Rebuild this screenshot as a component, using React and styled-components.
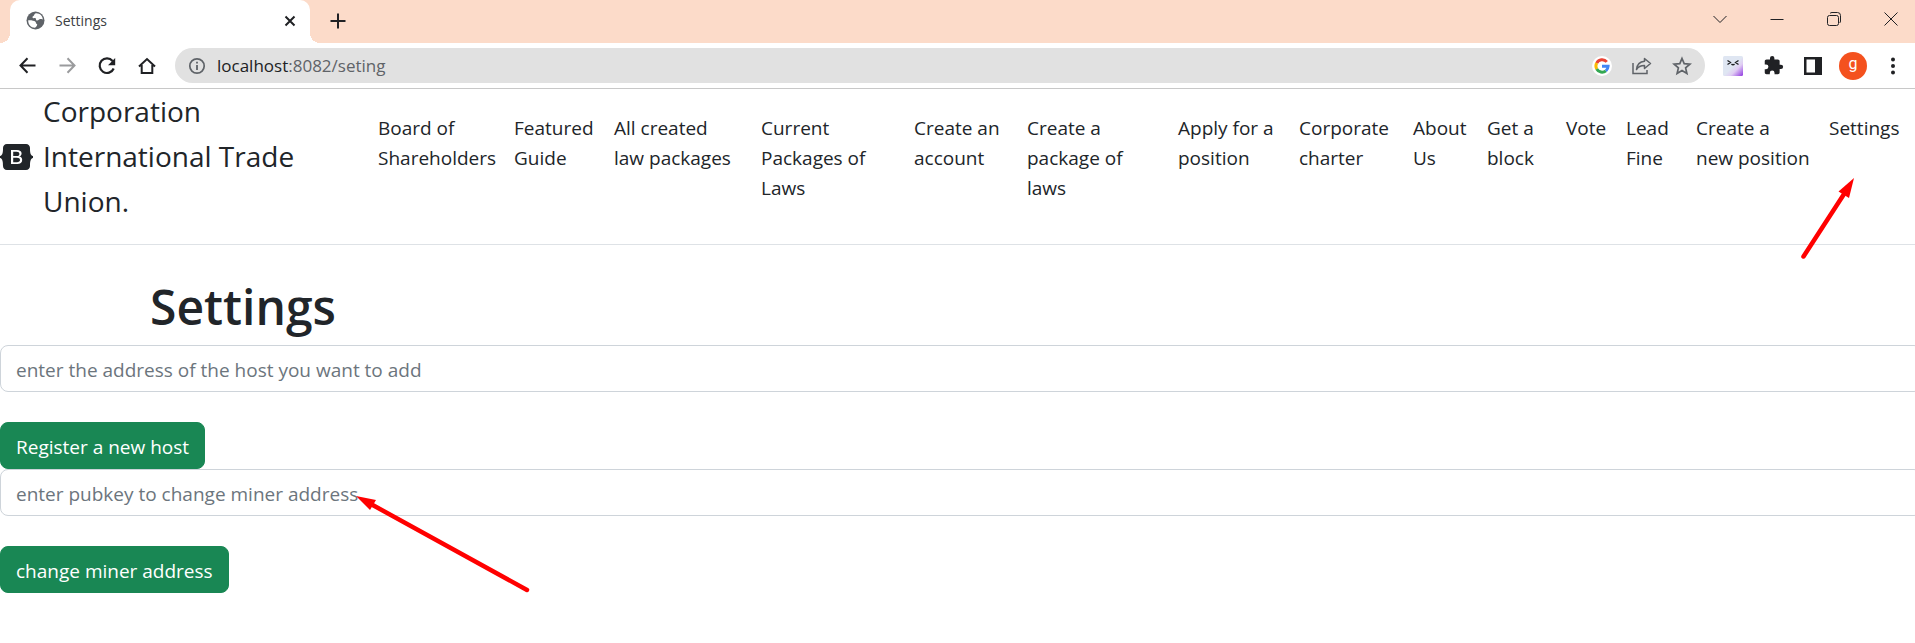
import React from "react";
import styled, { createGlobalStyle } from "styled-components";

const GlobalStyle = createGlobalStyle`
  * { box-sizing: border-box; }
  body {
    margin: 0;
    overflow-x: hidden;
    background: #fff;
    color: #212529;
    font-family: "Open Sans", "Noto Sans", sans-serif;
    font-size: 19px;
    line-height: 30px;
  }
  button, input { font: inherit; }
`;

/* ---------- Browser frame ---------- */

const TabStrip = styled.div`
  display: flex;
  justify-content: space-between;
  height: 43px;
  padding-left: 10px;
  background: #fcdbc9;
`;

const TabGroup = styled.div`
  display: flex;
  align-items: center;
`;

const Tab = styled.div`
  position: relative;
  display: flex;
  align-items: center;
  gap: 10px;
  width: 300px;
  height: 43px;
  padding: 0 10px 2px 16px;
  border-radius: 10px 10px 0 0;
  background: #fff;
  color: #3c4043;
  font-size: 14px;

  &::before,
  &::after {
    content: "";
    position: absolute;
    bottom: 0;
    width: 10px;
    height: 10px;
  }
  &::before {
    right: 100%;
    background: radial-gradient(circle at 0 0, transparent 10px, #fff 10px);
  }
  &::after {
    left: 100%;
    background: radial-gradient(circle at 100% 0, transparent 10px, #fff 10px);
  }
`;

const TabTitle = styled.span`
  flex: 1;
`;

const IconButton = styled.button`
  display: flex;
  flex: none;
  align-items: center;
  justify-content: center;
  width: ${(p) => p.$size || 24}px;
  height: ${(p) => p.$size || 24}px;
  padding: 0;
  border: 0;
  background: none;
  color: ${(p) => p.$color || "#202124"};
`;

const NewTab = styled(IconButton)`
  margin: 0 0 2px 16px;
`;

const WindowControls = styled.div`
  display: flex;
  height: 37px;
`;

const WindowButton = styled(IconButton)`
  width: 57px;
  height: 37px;
  &:last-child { width: 53px; padding-left: 5px; }
`;

const Toolbar = styled.div`
  display: flex;
  align-items: center;
  gap: 16px;
  height: 46px;
  padding: 0 8px 0 15px;
  border-bottom: 1px solid #c8c8c8;
`;

const AddressBar = styled.div`
  display: flex;
  flex: 1;
  align-items: center;
  gap: 16px;
  height: 35px;
  padding: 0 11px 0 13px;
  border-radius: 18px;
  background: #e1e1e1;
`;

const Address = styled.div`
  flex: 1;
  margin-left: -5px;
  color: #202124;
  font-size: 17px;
  outline: 0;
  span { color: #5f6368; }
`;

const Extensions = styled.div`
  display: flex;
  align-items: center;
  gap: 12px;
  margin-left: -2px;
`;

const Avatar = styled.button`
  width: 28px;
  height: 28px;
  padding: 0 0 4px;
  border: 0;
  border-radius: 50%;
  background: #f4511e;
  color: #fff;
  font-family: Roboto, sans-serif;
  font-size: 16px;
  line-height: 24px;
`;

/* ---------- Page ---------- */

const Page = styled.div`
  position: relative;
`;

const Header = styled.header`
  display: flex;
  align-items: flex-start;
  padding-bottom: 20px;
  border-bottom: 1px solid #dee2e6;
`;

const Brand = styled.a`
  display: flex;
  flex: 368;
  align-items: center;
  gap: 10px;
  color: #212529;
  font-size: 28px;
  line-height: 45px;
  text-decoration: none;
  white-space: pre-line;
`;

const Nav = styled.ul`
  display: grid;
  flex: 1547;
  grid-template-columns: 136fr 100fr 147fr 153fr 113fr 151fr 121fr 114fr 74fr 79fr 60fr 70fr 133fr 96fr;
  margin: 0;
  padding: 14px 0 0;
  list-style: none;
  li { min-width: 0; }
`;

const NavLink = styled.a`
  display: block;
  padding: 10px;
  color: #212529;
  text-decoration: none;
  white-space: pre;
`;

const Title = styled.h1`
  margin: 0;
  padding: 32px 0 8px 150px;
  font-size: 48px;
  font-weight: 600;
  line-height: 60px;
`;

/* The fields bleed past the right edge of the window. */
const Form = styled.form`
  display: flex;
  flex-direction: column;
  align-items: flex-start;
  gap: 30px;
  margin-right: -7px;
`;

const TextInput = styled.input`
  display: block;
  width: 100%;
  height: 47px;
  padding: 8px 15px 6px;
  border: 1px solid #ced4da;
  border-radius: 8px;
  background: #fff;
  color: #212529;
  &::placeholder { color: #6c757d; opacity: 1; }
`;

const SubmitButton = styled.button`
  height: 47px;
  padding: 8px 15px 6px;
  border: 1px solid #198754;
  border-radius: 8px;
  background: #198754;
  color: #fff;
`;

const Arrow = styled.svg`
  position: absolute;
  top: ${(p) => p.$top}px;
  left: ${(p) => p.$left};
  pointer-events: none;
`;

/* ---------- Icons ---------- */

const stroke = { fill: "none", stroke: "currentColor", strokeWidth: 2 };

const Globe = () => (
  <svg width="19" height="19" viewBox="0 0 19 19" aria-hidden="true">
    <circle cx="9.5" cy="9.5" r="9" fill="#5f6368" />
    <path d="M10 2.2c-2 .3-1.300 2.300-3 3-1 .5-.5 2.300 1 2 1.500-.3 2 .3 2 1.300 0 1.500 2 1.200 2.800.2.600-.8 2-.7 4-.2-.1-3.500-3-6.400-6.800-6.300zM2.200 9.300c2.500-.4 6 .5 7 1.200 1.200.8.300 2 1.300 2.300 1.500.4.300 2.700-1.500 4C5 16.900 2 13.400 2.200 9.300z" fill="#fff" />
  </svg>
);

const Back = ({ flip }) => (
  <svg width="17" height="17" viewBox="0 0 17 17" transform={flip ? "scale(-1 1)" : undefined} aria-hidden="true">
    <path d="M16.500 8.500H2M8.500 1.300L1.500 8.500l7 7.200" {...stroke} />
  </svg>
);

const Reload = () => (
  <svg width="18" height="18" viewBox="0 0 18 18" aria-hidden="true">
    <path d="M14.600 4A7.300 7.300 0 1 0 15.700 11.500" {...stroke} strokeWidth="2.200" />
    <path d="M17.200 1v7.200H10z" fill="currentColor" />
  </svg>
);

const Home = () => (
  <svg width="18" height="18" viewBox="0 0 18 18" aria-hidden="true">
    <path d="M1 9.500L9 2l8 7.500M3.700 8v8h10.600V8" {...stroke} />
  </svg>
);

const Info = () => (
  <svg width="18" height="18" viewBox="0 0 18 18" aria-hidden="true">
    <circle cx="9" cy="9" r="7.200" fill="none" stroke="#5f6368" strokeWidth="1.700" />
    <path d="M9 8v5M9 4.800v1.800" stroke="#5f6368" strokeWidth="1.800" />
  </svg>
);

const Google = () => (
  <svg width="20" height="20" viewBox="0 0 20 20" aria-hidden="true">
    <circle cx="10" cy="10" r="10" fill="#fff" />
    <g fill="none" strokeWidth="3">
      <path d="M14.800 5.900A6.100 6.100 0 0 0 4.700 7.100" stroke="#ea4335" />
      <path d="M4.700 7.100a6.100 6.100 0 0 0 0 5.900" stroke="#fbbc05" />
      <path d="M4.700 13a6.100 6.100 0 0 0 9.200 1.800" stroke="#34a853" />
      <path d="M13.900 14.800a6.100 6.100 0 0 0 2.200-4.500H10" stroke="#4285f4" />
    </g>
  </svg>
);

const Share = () => (
  <svg width="20" height="18" viewBox="0 0 20 18" aria-hidden="true">
    <path d="M1 6v10.500h14V13" {...stroke} strokeWidth="1.500" />
    <path d="M12.500 1.500L18.500 6.500l-6 5V8.600C8.500 8.600 6 10 4.500 12.500 5 8 7.500 4.700 12.500 4.300z" {...stroke} strokeWidth="1.500" strokeLinejoin="round" />
  </svg>
);

const Star = () => (
  <svg width="20" height="20" viewBox="0 0 20 20" aria-hidden="true">
    <path d="M10 2.500l2.200 5.200 5.700.5-4.300 3.700 1.300 5.500-4.900-2.900-4.900 2.900 1.300-5.500-4.300-3.700 5.700-.5z" {...stroke} strokeWidth="1.700" />
  </svg>
);

const Face = () => (
  <svg width="20" height="20" viewBox="0 0 20 20" aria-hidden="true">
    <defs>
      <linearGradient id="face" x1="0" y1="0" x2="1" y2="1">
        <stop offset="0.500" stopColor="#dfe6f2" />
        <stop offset="0.680" stopColor="#e0cdf3" />
        <stop offset="1" stopColor="#8f35e0" />
      </linearGradient>
    </defs>
    <rect width="20" height="20" rx="1.500" fill="url(#face)" />
    <path d="M4.500 4.500l3 2-3 2M15.500 4.500l-3 2 3 2M8.500 8c.8 1 2.200 1 3 0" fill="none" stroke="#202124" strokeWidth="1.300" />
  </svg>
);

const Puzzle = () => (
  <svg width="21" height="21" viewBox="0 0 24 24" aria-hidden="true">
    <path fill="currentColor" d="M20.500 11H19V7c0-1.100-.9-2-2-2h-4V3.500a2.500 2.500 0 0 0-5 0V5H4c-1.100 0-2 .9-2 2v3.800h1.500a2.700 2.700 0 0 1 0 5.400H2V20c0 1.100.9 2 2 2h3.800v-1.500a2.700 2.700 0 0 1 5.400 0V22H17c1.100 0 2-.9 2-2v-4h1.500a2.500 2.500 0 0 0 0-5z" />
  </svg>
);

const SidePanel = () => (
  <svg width="18" height="18" viewBox="0 0 18 18" aria-hidden="true">
    <path fill="currentColor" fillRule="evenodd" d="M0 0h18v18H0zM2.500 2.500v13H11v-13z" />
  </svg>
);

const Dots = () => (
  <svg width="4" height="18" viewBox="0 0 4 18" fill="currentColor" aria-hidden="true">
    <circle cx="2" cy="2.500" r="2" />
    <circle cx="2" cy="9" r="2" />
    <circle cx="2" cy="15.500" r="2" />
  </svg>
);

const Line = ({ d, size = 14, width = 1 }) => (
  <svg width={size} height={size} viewBox={`0 0 ${size} ${size}`} aria-hidden="true">
    <path d={d} {...stroke} strokeWidth={width} />
  </svg>
);

const BootstrapLogo = () => (
  <svg width="33" height="26" viewBox="0 0 33 26" aria-hidden="true">
    <path
      fill="#212529"
      fillRule="evenodd"
      d="M7 0h19c2.500 0 4 1.800 4 4 0 3.500.2 7.500 3 8v2c-2.800.5-3 4.500-3 8 0 2.200-1.500 4-4 4H7c-2.500 0-4-1.800-4-4 0-3.500-.2-7.500-3-8v-2c2.800-.5 3-4.500 3-8 0-2.200 1.500-4 4-4zM11 6v14h6.200c3.100 0 5-1.500 5-4 0-1.900-1.200-3.200-3.100-3.400v-.1c1.400-.2 2.500-1.500 2.500-3C21.600 7.300 19.900 6 17 6zm2.200 1.800h3.400c1.800 0 2.800.7 2.800 2.100 0 1.500-1.100 2.200-3.200 2.200h-3zm0 6h3.600c2.100 0 3.200.8 3.200 2.200s-1.100 2.200-3.100 2.200h-3.700z"
    />
  </svg>
);

/* ---------- Content ---------- */

const navItems = [
  "Board of\nShareholders",
  "Featured\nGuide",
  "All created\nlaw packages",
  "Current\nPackages of\nLaws",
  "Create an\naccount",
  "Create a\npackage of\nlaws",
  "Apply for a\nposition",
  "Corporate\ncharter",
  "About\nUs",
  "Get a\nblock",
  "Vote",
  "Lead\nFine",
  "Create a\nnew position",
  "Settings",
];

function BrowserFrame() {
  return (
    <>
      <TabStrip>
        <TabGroup>
          <Tab>
            <Globe />
            <TabTitle>Settings</TabTitle>
            <IconButton $size={20} aria-label="Close tab">
              <Line size={12} width={2} d="M1.500 1.500l9 9M10.500 1.500l-9 9" />
            </IconButton>
          </Tab>
          <NewTab aria-label="New tab">
            <Line size={16} width={2} d="M8 0.500v15M0.500 8h15" />
          </NewTab>
        </TabGroup>
        <WindowControls>
          <WindowButton aria-label="Search tabs"><Line d="M0.500 4l6.500 6.500L13.500 4" /></WindowButton>
          <WindowButton aria-label="Minimize"><Line d="M0.500 7.500h13" /></WindowButton>
          <WindowButton aria-label="Restore">
            <Line d="M2.500 3.500h7a2 2 0 0 1 2 2v6a2 2 0 0 1-2 2h-7a2 2 0 0 1-2-2v-6a2 2 0 0 1 2-2zM3 1.500c.5-.7 1-1 2-1h5.500a3 3 0 0 1 3 3V9c0 1-.3 1.500-1 2" />
          </WindowButton>
          <WindowButton aria-label="Close window"><Line d="M0.500 0.500l13 13M13.500 0.500l-13 13" /></WindowButton>
        </WindowControls>
      </TabStrip>
      <Toolbar>
        <IconButton aria-label="Back"><Back /></IconButton>
        <IconButton $color="#9a9b9d" aria-label="Forward"><Back flip /></IconButton>
        <IconButton aria-label="Reload"><Reload /></IconButton>
        <IconButton aria-label="Home"><Home /></IconButton>
        <AddressBar>
          <Info />
          <Address role="textbox" aria-label="Address" contentEditable suppressContentEditableWarning spellCheck={false}>
            localhost<span>:8082/seting</span>
          </Address>
          <IconButton aria-label="Google Lens"><Google /></IconButton>
          <IconButton $color="#5f6368" aria-label="Share"><Share /></IconButton>
          <IconButton $color="#5f6368" aria-label="Bookmark"><Star /></IconButton>
        </AddressBar>
        <Extensions>
          <IconButton $size={28} aria-label="Extension"><Face /></IconButton>
          <IconButton $size={28} aria-label="Extensions"><Puzzle /></IconButton>
          <IconButton $size={28} aria-label="Side panel"><SidePanel /></IconButton>
          <Avatar aria-label="Profile">g</Avatar>
          <IconButton $size={28} aria-label="Menu"><Dots /></IconButton>
        </Extensions>
      </Toolbar>
    </>
  );
}

export default function App() {
  return (
    <>
      <GlobalStyle />
      <BrowserFrame />
      <Page>
        <Header>
          <Brand href="#">
            <BootstrapLogo />
            <span>{"Corporation\nInternational Trade\nUnion."}</span>
          </Brand>
          <Nav>
            {navItems.map((item) => (
              <li key={item}><NavLink href="#">{item}</NavLink></li>
            ))}
          </Nav>
        </Header>
        <main>
          <Title>Settings</Title>
          <Form>
            <TextInput aria-label="Host address" placeholder="enter the address of the host you want to add" />
            <SubmitButton type="button">Register a new host</SubmitButton>
          </Form>
          <Form>
            <TextInput aria-label="Miner pubkey" placeholder="enter pubkey to change miner address" />
            <SubmitButton type="button">change miner address</SubmitButton>
          </Form>
        </main>
        <Arrow $top={87} $left="calc(100% - 117px)" width="60" height="86" viewBox="0 0 60 86" aria-hidden="true">
          <path d="M5.500 80.500L48 15" stroke="#f00" strokeWidth="4.500" strokeLinecap="round" />
          <path d="M56 2L40.500 15.500 51 22z" fill="#f00" />
        </Arrow>
        <Arrow $top={405} $left="354px" width="180" height="105" viewBox="0 0 180 105" aria-hidden="true">
          <path d="M173 96L15 9" stroke="#f00" strokeWidth="4.500" strokeLinecap="round" />
          <path d="M2 2l20 4-6 10z" fill="#f00" />
        </Arrow>
      </Page>
    </>
  );
}
